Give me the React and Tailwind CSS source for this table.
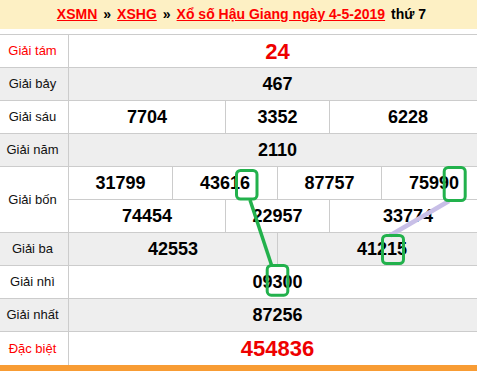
const font = { fontFamily: '"Liberation Sans", Arial, sans-serif' };

function Row({ label, red, bg, children, last }) {
  return (
    <div className={`flex h-[33px] ${last ? "" : "border-b border-[#cccccc]"} ${bg ? "bg-[#eeeeee]" : "bg-white"}`}>
      <div className={`flex w-[72px] shrink-0 items-center justify-center border-r border-[#cccccc] text-[13px] ${red ? "text-[#ff0000]" : "text-[#111]"}`}>
        {label}
      </div>
      <div className="flex flex-1">{children}</div>
    </div>
  );
}

function Cell({ w, children, border, big, red }) {
  return (
    <div
      className={`flex shrink-0 items-center justify-center font-bold ${border ? "border-r border-[#cccccc]" : ""} ${big ? "text-[22px]" : "text-[18px]"} ${red ? "text-[#ee0000]" : "text-black"}`}
      style={{ width: w }}
    >
      {children}
    </div>
  );
}

export default function App() {
  return (
    <div className="relative h-[371px] w-[477px] overflow-hidden bg-white" style={font}>
      <div className="ml-[-3px] w-[489px]">
        <div className="flex h-[29px] items-center justify-center gap-[6px] bg-[#fdf0c4] text-[14px] font-bold text-black">
          <span className="text-[#ff0000] underline">XSMN</span>
          <span>»</span>
          <span className="text-[#ff0000] underline">XSHG</span>
          <span>»</span>
          <span className="text-[#ff0000] underline">Xổ số Hậu Giang ngày 4-5-2019</span>
          <span>thứ 7</span>
        </div>

        <div className="mt-[5px] border-t border-[#cccccc]">
          <Row label="Giải tám" red>
            <Cell w={417} big red>24</Cell>
          </Row>
          <Row label="Giải bảy" bg>
            <Cell w={417}>467</Cell>
          </Row>
          <Row label="Giải sáu">
            <Cell w={157} border>7704</Cell>
            <Cell w={104} border>3352</Cell>
            <Cell w={156}>6228</Cell>
          </Row>
          <Row label="Giải năm" bg>
            <Cell w={417}>2110</Cell>
          </Row>

          <div className="flex h-[66px] border-b border-[#cccccc] bg-white">
            <div className="flex w-[72px] shrink-0 items-center justify-center border-r border-[#cccccc] text-[13px] text-[#111]">
              Giải bốn
            </div>
            <div className="flex flex-1 flex-col">
              <div className="flex h-[33px] border-b border-[#cccccc]">
                <Cell w={104} border>31799</Cell>
                <Cell w={105} border>43616</Cell>
                <Cell w={104} border>87757</Cell>
                <Cell w={104}>75990</Cell>
              </div>
              <div className="flex h-[32px]">
                <Cell w={157} border>74454</Cell>
                <Cell w={104} border>22957</Cell>
                <Cell w={156}>33774</Cell>
              </div>
            </div>
          </div>

          <Row label="Giải ba" bg>
            <Cell w={209} border>42553</Cell>
            <Cell w={208}>41215</Cell>
          </Row>
          <Row label="Giải nhì">
            <Cell w={417}>09300</Cell>
          </Row>
          <Row label="Giải nhất" bg>
            <Cell w={417}>87256</Cell>
          </Row>
          <Row label="Đặc biệt" red last>
            <Cell w={417} big red>454836</Cell>
          </Row>
        </div>
        <div className="h-[20px] bg-[#f89c34]" />
      </div>

      <svg className="pointer-events-none absolute left-0 top-0" width="477" height="371">
        <line x1="250" y1="200" x2="271.5" y2="265" stroke="#22b14c" strokeWidth="3.5" />
        <line x1="449" y1="201" x2="390" y2="235.5" stroke="#c8bfe7" strokeWidth="4.5" />
        <g fill="none" stroke="#22b14c" strokeWidth="3">
          <rect x="236.5" y="170.5" width="20.5" height="28.5" rx="4" />
          <rect x="444.2" y="167.5" width="21" height="33" rx="4" />
          <rect x="382.5" y="235.5" width="21" height="28" rx="4" />
          <rect x="267.2" y="265.5" width="20.6" height="29.7" rx="4" />
        </g>
      </svg>
    </div>
  );
}
